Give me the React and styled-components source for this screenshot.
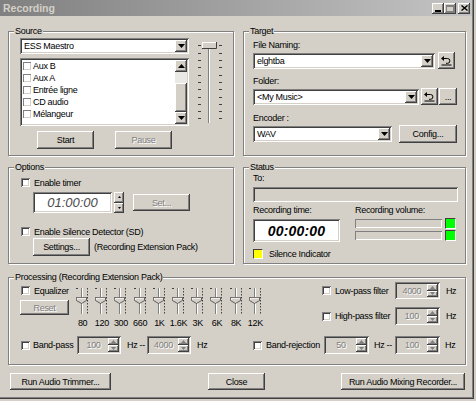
import React from 'react';
import styled, { createGlobalStyle, css } from 'styled-components';

const FACE = '#d4d0c8';
const SHADOW = '#808080';
const DARK = '#404040';

const GlobalStyle = createGlobalStyle`
  html, body {
    margin: 0;
    padding: 0;
    background: ${FACE};
  }
  body {
    font-family: "Liberation Sans", Arial, sans-serif;
    font-size: 9px;
    letter-spacing: -0.3px;
    color: #000;
  }
  * {
    box-sizing: border-box;
  }
`;

const sunken = css`
  box-shadow: inset 1px 1px ${SHADOW}, inset -1px -1px #fff, inset 2px 2px ${DARK}, inset -2px -2px ${FACE};
`;

const raised = css`
  box-shadow: inset -1px -1px ${DARK}, inset 1px 1px #fff, inset -2px -2px ${SHADOW}, inset 2px 2px ${FACE};
`;

const thinSunken = css`
  box-shadow: inset 1px 1px ${SHADOW}, inset -1px -1px #fff;
`;

const Window = styled.div`
  width: 474px;
  height: 399px;
  background: ${FACE};
  box-shadow: inset -1px -1px ${DARK}, inset -2px -2px ${SHADOW};
  display: flex;
  flex-direction: column;
`;

const TitleBar = styled.div`
  height: 16px;
  margin-right: 2px;
  padding: 0 2px 0 3px;
  display: flex;
  align-items: center;
  justify-content: space-between;
  background: linear-gradient(to right, #808080, #c4c4c4);
`;

const TitleText = styled.span`
  font-size: 10.5px;
  font-weight: bold;
  letter-spacing: 0;
  color: ${FACE};
`;

const CaptionButtons = styled.div`
  display: flex;
  align-items: center;
`;

const CaptionButton = styled.span`
  width: 12px;
  height: 11px;
  margin-left: ${p => p.$gap || 0}px;
  background: ${FACE};
  ${raised};
  display: flex;
  align-items: center;
  justify-content: center;
`;

const Body = styled.div`
  padding: 15px 8px 0 8px;
  display: flex;
  flex-direction: column;
`;

const TopRow = styled.div`
  display: grid;
  grid-template-columns: 226px 223px;
  column-gap: 9px;
  margin-top: ${p => p.$mt || 0}px;
`;

const Frame = styled.div`
  position: relative;
  height: ${p => p.$h}px;
  margin-top: ${p => p.$mt || 0}px;
  padding: ${p => p.$pad};
  border: 1px solid ${SHADOW};
  box-shadow: inset 1px 1px #fff, 1px 1px #fff;
`;

const Caption = styled.span`
  position: absolute;
  top: -6px;
  left: 5px;
  padding: 0 1px;
  line-height: 11px;
  background: ${FACE};
  white-space: nowrap;
`;

const Label = styled.div`
  line-height: 11px;
  height: 11px;
  white-space: nowrap;
  margin-top: ${p => p.$mt || 0}px;
`;

const Row = styled.div`
  display: flex;
  align-items: center;
  margin-top: ${p => p.$mt || 0}px;
  margin-left: ${p => p.$ml || 0}px;
`;

const Button = styled.button`
  width: ${p => p.$w}px;
  height: ${p => p.$h || 18}px;
  margin-left: ${p => p.$ml || 0}px;
  padding: 0;
  border: 0;
  background: ${FACE};
  ${raised};
  font: inherit;
  letter-spacing: inherit;
  color: ${p => (p.disabled ? SHADOW : '#000')};
  text-shadow: ${p => (p.disabled ? '1px 1px #fff' : 'none')};
  display: flex;
  align-items: center;
  justify-content: center;
  flex: none;
`;

const ComboBox = styled.div`
  width: ${p => p.$w}px;
  height: 16px;
  padding: 2px;
  background: #fff;
  ${sunken};
  display: flex;
  align-items: center;
  flex: none;
`;

const ComboText = styled.span`
  flex: 1;
  padding-left: 2px;
  line-height: 12px;
  white-space: nowrap;
  overflow: hidden;
`;

const ArrowButton = styled.span`
  width: ${p => p.$w || 12}px;
  height: ${p => p.$h || 12}px;
  background: ${FACE};
  ${raised};
  display: flex;
  align-items: center;
  justify-content: center;
  flex: none;
`;

const Check = styled.span`
  width: 9px;
  height: 9px;
  background: #fff;
  ${sunken};
  flex: none;
`;

const SmallCheck = styled.span`
  width: 8px;
  height: 8px;
  margin-right: 2px;
  background: #fff;
  box-shadow: inset 1px 1px ${SHADOW}, inset -1px -1px ${FACE};
  flex: none;
`;

const CheckLabel = styled.label`
  display: flex;
  align-items: center;
  width: ${p => (p.$w ? `${p.$w}px` : 'auto')};
  height: 11px;
  white-space: nowrap;
  flex: none;
  & > span:last-child {
    margin-left: ${p => p.$gap || 3}px;
  }
`;

/* Source */

const SourceInner = styled.div`
  display: flex;
  align-items: flex-start;
`;

const SourceColumn = styled.div`
  width: 169px;
  display: flex;
  flex-direction: column;
`;

const ListBox = styled.div`
  height: 68px;
  margin-top: 4px;
  padding: 2px;
  background: #fff;
  ${sunken};
  display: flex;
`;

const ListItems = styled.div`
  flex: 1;
  padding-left: 1px;
`;

const ListItem = styled.div`
  height: 12px;
  display: flex;
  align-items: center;
  white-space: nowrap;
`;

const ScrollBar = styled.div`
  width: 12px;
  display: flex;
  flex-direction: column;
`;

const ScrollTrack = styled.div`
  height: ${p => p.$h}px;
  background: #ebe9e5;
`;

const ScrollThumb = styled.div`
  height: ${p => p.$h}px;
  background: ${FACE};
  ${raised};
`;

const ButtonRow = styled.div`
  display: flex;
  gap: 21px;
  margin-top: 5px;
  padding-left: 17px;
`;

const SliderColumn = styled.div`
  margin-left: 7px;
  margin-top: 2px;
`;

/* Options */

const TimeField = styled.div`
  width: 79px;
  height: 21px;
  background: #fff;
  ${sunken};
  display: flex;
  align-items: center;
  justify-content: center;
  font-size: 13px;
  font-style: italic;
  letter-spacing: 0;
  color: #4a4a4a;
`;

const UpDown = styled.div`
  width: 10px;
  height: 21px;
  margin-left: 2px;
  display: flex;
  flex-direction: column;
`;

const UpDownHalf = styled.span`
  flex: 1;
  background: ${FACE};
  ${raised};
  display: flex;
  align-items: center;
  justify-content: center;
`;

const Note = styled.span`
  margin-left: ${p => p.$ml || 4}px;
  white-space: nowrap;
`;

/* Status */

const StatusField = styled.div`
  width: 205px;
  height: 15px;
  margin-top: 3px;
  background: ${FACE};
  ${sunken};
`;

const TwoCols = styled.div`
  display: grid;
  grid-template-columns: 102px auto;
  margin-top: ${p => p.$mt || 0}px;
`;

const TimeDisplay = styled.div`
  width: 87px;
  height: 23px;
  background: #fff;
  ${sunken};
  display: flex;
  align-items: center;
  justify-content: center;
  font-size: 14px;
  font-weight: bold;
  font-style: italic;
  letter-spacing: 0.2px;
`;

const VolumeColumn = styled.div`
  margin-top: -1px;
  display: flex;
  flex-direction: column;
  gap: 1px;
`;

const VolumeRow = styled.div`
  height: 11px;
  display: flex;
  align-items: center;
`;

const VolumeBar = styled.div`
  width: 87px;
  height: 9px;
  ${thinSunken};
`;

const Lamp = styled.span`
  width: ${p => p.$s}px;
  height: ${p => p.$s}px;
  margin-left: ${p => p.$ml || 0}px;
  background: ${p => p.$color};
  border: 1px solid;
  border-color: ${DARK} #fff #fff ${DARK};
  flex: none;
`;

/* Processing */

const TopArea = styled.div`
  height: 54px;
  display: flex;
  align-items: flex-start;
`;

const EqControls = styled.div`
  width: 52px;
  margin-top: 3px;
  display: flex;
  flex-direction: column;
`;

const EqBank = styled.div`
  margin-top: 3px;
  display: grid;
  grid-template-columns: repeat(10, 19.2px);
`;

const EqCell = styled.div`
  display: flex;
  flex-direction: column;
  align-items: center;
`;

const EqLabel = styled.span`
  margin-top: 3px;
  line-height: 11px;
  white-space: nowrap;
`;

const Filters = styled.div`
  margin-left: 57px;
  display: flex;
  flex-direction: column;
  gap: 8px;
`;

const FilterRow = styled.div`
  display: flex;
  align-items: center;
`;

const SpinBox = styled.div`
  width: ${p => p.$w}px;
  height: ${p => p.$h || 18}px;
  padding: 2px;
  background: ${FACE};
  ${sunken};
  display: flex;
  flex: none;
`;

const SpinValue = styled.span`
  flex: 1;
  display: flex;
  align-items: center;
  justify-content: center;
  color: ${SHADOW};
  text-shadow: 1px 1px #fff;
`;

const SpinButtons = styled.span`
  width: 11px;
  display: flex;
  flex-direction: column;
`;

const Unit = styled.span`
  width: ${p => p.$w}px;
  margin-left: ${p => p.$ml}px;
  white-space: nowrap;
  flex: none;
`;

const BottomRow = styled.div`
  display: grid;
  grid-template-columns: 232px auto;
`;

const Footer = styled.div`
  display: flex;
  margin-top: 8px;
`;

/* drawings */

const Tri = ({ dir = 'down', w = 7, h = 4, color = '#000' }) => {
  const pts = dir === 'down' ? `0,0 ${w},0 ${w / 2},${h}` : `0,${h} ${w},${h} ${w / 2},0`;
  return (
    <svg width={w} height={h} viewBox={`0 0 ${w} ${h}`}>
      <polygon points={pts} fill={color} />
    </svg>
  );
};

const ResetIcon = () => (
  <svg width="11" height="10" viewBox="0 0 11 10">
    <polygon points="0,2.5 3,0 3,5" fill="#000" />
    <path d="M3 2.5 H6.5 A2.4 2.4 0 0 1 6.5 7.3 H5" stroke="#000" strokeWidth="1" fill="none" />
    <path d="M0.5 9 H10.5" stroke="#000" strokeWidth="1" />
  </svg>
);

const Thumb = ({ x, y, w, h }) => (
  <g>
    <rect x={x} y={y} width={w} height={h} fill={FACE} />
    <path d={`M${x + 0.5} ${y + h} V${y + 0.5} H${x + w}`} stroke="#fff" fill="none" />
    <path d={`M${x} ${y + h - 0.5} H${x + w - 0.5} V${y}`} stroke={DARK} fill="none" />
  </g>
);

const mainTicks = [5, 13, 20, 27, 35, 42, 49, 57, 64, 71, 78];

const MainSlider = () => (
  <svg width="27" height="86" viewBox="0 0 27 86">
    {mainTicks.map(y => (
      <g key={y}>
        <rect x="2" y={y} width="3" height="1" fill={DARK} />
        <rect x="23" y={y} width="3" height="1" fill={DARK} />
      </g>
    ))}
    <rect x="12" y="5" width="1" height="78" fill={SHADOW} />
    <rect x="13" y="5" width="1" height="78" fill="#fff" />
    <Thumb x={6} y={2} w={15} h={7} />
  </svg>
);

const EqSlider = () => (
  <svg width="19" height="30" viewBox="0 0 19 30">
    <rect x="3" y="3" width="2" height="1" fill={DARK} />
    <rect x="8" y="3" width="1" height="26" fill={SHADOW} />
    <rect x="9" y="3" width="1" height="26" fill="#fff" />
    {[3, 6, 9, 12, 15, 18, 21, 24, 27].map(y => (
      <rect key={y} x="14" y={y} width="1" height="1.5" fill={DARK} />
    ))}
    <polygon points="3.5,12.5 13.5,12.5 13.5,15.5 8.5,18.5 3.5,15.5" fill={FACE} stroke={DARK} strokeWidth="0.8" />
    <path d="M4.3 15 V13.3 H13" stroke="#fff" fill="none" strokeWidth="0.8" />
  </svg>
);

const Combo = ({ w, text }) => (
  <ComboBox $w={w}>
    <ComboText>{text}</ComboText>
    <ArrowButton>
      <Tri />
    </ArrowButton>
  </ComboBox>
);

const Spin = ({ w, h, value }) => (
  <SpinBox $w={w} $h={h}>
    <SpinValue>{value}</SpinValue>
    <SpinButtons>
      <UpDownHalf>
        <Tri dir="up" w={5} h={3} color={SHADOW} />
      </UpDownHalf>
      <UpDownHalf>
        <Tri w={5} h={3} color={SHADOW} />
      </UpDownHalf>
    </SpinButtons>
  </SpinBox>
);

const CheckItem = ({ children, w, gap }) => (
  <CheckLabel $w={w} $gap={gap}>
    <Check />
    <span>{children}</span>
  </CheckLabel>
);

const sources = ['Aux B', 'Aux A', 'Entrée ligne', 'CD audio', 'Mélangeur'];
const bands = ['80', '120', '300', '660', '1K', '1.6K', '3K', '6K', '8K', '12K'];

export default function App() {
  return (
    <>
      <GlobalStyle />
      <Window>
        <TitleBar>
          <TitleText>Recording</TitleText>
          <CaptionButtons>
            <CaptionButton>
              <svg width="6" height="7" viewBox="0 0 6 7">
                <rect x="0" y="5" width="6" height="2" fill="#000" />
              </svg>
            </CaptionButton>
            <CaptionButton>
              <svg width="8" height="7" viewBox="0 0 8 7">
                <rect x="0.5" y="0.5" width="7" height="6" fill="none" stroke={SHADOW} />
                <rect x="0" y="0" width="8" height="2" fill={SHADOW} />
              </svg>
            </CaptionButton>
            <CaptionButton $gap={2}>
              <svg width="7" height="6" viewBox="0 0 7 6">
                <path d="M0.5 0.5 L6.5 5.5 M6.5 0.5 L0.5 5.5" stroke="#000" strokeWidth="1.4" />
              </svg>
            </CaptionButton>
          </CaptionButtons>
        </TitleBar>

        <Body>
          <TopRow>
            <Frame $h={125} $pad="6px 0 0 11px">
              <Caption>Source</Caption>
              <SourceInner>
                <SourceColumn>
                  <Combo w={169} text="ESS Maestro" />
                  <ListBox>
                    <ListItems>
                      {sources.map(s => (
                        <ListItem key={s}>
                          <SmallCheck />
                          {s}
                        </ListItem>
                      ))}
                    </ListItems>
                    <ScrollBar>
                      <ArrowButton>
                        <Tri dir="up" />
                      </ArrowButton>
                      <ScrollTrack $h={11} />
                      <ScrollThumb $h={29} />
                      <ArrowButton>
                        <Tri />
                      </ArrowButton>
                    </ScrollBar>
                  </ListBox>
                  <ButtonRow>
                    <Button $w={57}>Start</Button>
                    <Button $w={57} disabled>
                      Pause
                    </Button>
                  </ButtonRow>
                </SourceColumn>
                <SliderColumn>
                  <MainSlider />
                </SliderColumn>
              </SourceInner>
            </Frame>

            <Frame $h={125} $pad="8px 0 0 9px">
              <Caption>Target</Caption>
              <Label>File Naming:</Label>
              <Row $mt={1}>
                <Combo w={182} text="elghtba" />
                <Button $w={17} $h={17} $ml={3}>
                  <ResetIcon />
                </Button>
              </Row>
              <Label $mt={7}>Folder:</Label>
              <Row $mt={1}>
                <Combo w={166} text="<My Music>" />
                <Button $w={17} $h={17} $ml={2}>
                  <ResetIcon />
                </Button>
                <Button $w={18} $h={17} $ml={1}>
                  ...
                </Button>
              </Row>
              <Label $mt={8}>Encoder :</Label>
              <Row $mt={1}>
                <Combo w={139} text="WAV" />
                <Button $w={58} $ml={7}>
                  Config...
                </Button>
              </Row>
            </Frame>
          </TopRow>

          <TopRow $mt={11}>
            <Frame $h={97} $pad="9px 0 0 12px">
              <Caption>Options</Caption>
              <CheckItem gap={4}>Enable timer</CheckItem>
              <Row $mt={4} $ml={12}>
                <TimeField>01:00:00</TimeField>
                <UpDown>
                  <UpDownHalf>
                    <Tri dir="up" w={3} h={2} />
                  </UpDownHalf>
                  <UpDownHalf>
                    <Tri w={3} h={2} />
                  </UpDownHalf>
                </UpDown>
                <Button $w={57} $h={17} $ml={9} disabled>
                  Set...
                </Button>
              </Row>
              <Row $mt={13}>
                <CheckItem gap={4}>Enable Silence Detector (SD)</CheckItem>
              </Row>
              <Row $mt={1} $ml={12}>
                <Button $w={57}>Settings...</Button>
                <Note>(Recording Extension Pack)</Note>
              </Row>
            </Frame>

            <Frame $h={97} $pad="5px 0 0 9px">
              <Caption>Status</Caption>
              <Label>To:</Label>
              <StatusField />
              <TwoCols $mt={3}>
                <Label>Recording time:</Label>
                <Label>Recording volume:</Label>
              </TwoCols>
              <TwoCols $mt={3}>
                <TimeDisplay>00:00:00</TimeDisplay>
                <VolumeColumn>
                  <VolumeRow>
                    <VolumeBar />
                    <Lamp $s={11} $ml={3} $color="#00ff00" />
                  </VolumeRow>
                  <VolumeRow>
                    <VolumeBar />
                    <Lamp $s={11} $ml={3} $color="#00ff00" />
                  </VolumeRow>
                </VolumeColumn>
              </TwoCols>
              <Row $mt={7}>
                <Lamp $s={10} $color="#ffff00" />
                <Note $ml={6}>Silence Indicator</Note>
              </Row>
            </Frame>
          </TopRow>

          <Frame $h={88} $mt={13} $pad="4px 0 0 12px">
            <Caption>Processing (Recording Extension Pack)</Caption>
            <TopArea>
              <EqControls>
                <CheckItem gap={4}>Equalizer</CheckItem>
                <Row $mt={4} $ml={-1}>
                  <Button $w={49} $h={15} disabled>
                    Reset
                  </Button>
                </Row>
              </EqControls>
              <EqBank>
                {bands.map(b => (
                  <EqCell key={b}>
                    <EqSlider />
                    <EqLabel>{b}</EqLabel>
                  </EqCell>
                ))}
              </EqBank>
              <Filters>
                <FilterRow>
                  <CheckItem w={73} gap={4}>
                    Low-pass filter
                  </CheckItem>
                  <Spin w={45} h={17} value="4000" />
                  <Unit $w={12} $ml={6}>
                    Hz
                  </Unit>
                </FilterRow>
                <FilterRow>
                  <CheckItem w={73} gap={4}>
                    High-pass filter
                  </CheckItem>
                  <Spin w={45} value="100" />
                  <Unit $w={12} $ml={6}>
                    Hz
                  </Unit>
                </FilterRow>
              </Filters>
            </TopArea>
            <BottomRow>
              <FilterRow>
                <CheckItem w={56} gap={3}>
                  Band-pass
                </CheckItem>
                <Spin w={44} value="100" />
                <Unit $w={20} $ml={6}>
                  Hz --
                </Unit>
                <Spin w={44} value="4000" />
                <Unit $w={12} $ml={6}>
                  Hz
                </Unit>
              </FilterRow>
              <FilterRow>
                <CheckItem w={71} gap={4}>
                  Band-rejection
                </CheckItem>
                <Spin w={45} value="50" />
                <Unit $w={21} $ml={5}>
                  Hz --
                </Unit>
                <Spin w={45} value="100" />
                <Unit $w={12} $ml={5}>
                  Hz
                </Unit>
              </FilterRow>
            </BottomRow>
          </Frame>

          <Footer>
            <Button $w={101} $h={17} $ml={2}>
              Run Audio Trimmer...
            </Button>
            <Button $w={57} $h={17} $ml={97}>
              Close
            </Button>
            <Button $w={124} $h={17} $ml={76}>
              Run Audio Mixing Recorder...
            </Button>
          </Footer>
        </Body>
      </Window>
    </>
  );
}
